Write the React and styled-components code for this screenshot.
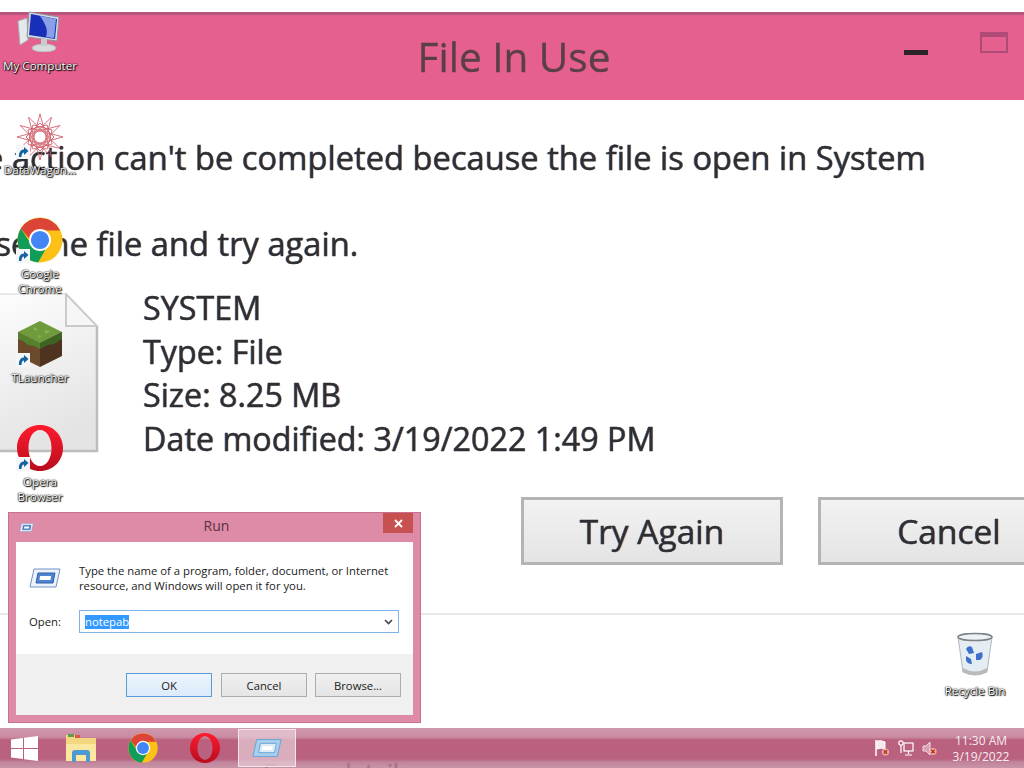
import React from 'react';
import styled, { createGlobalStyle } from 'styled-components';

const GlobalStyle = createGlobalStyle`
  html, body { margin: 0; padding: 0; background: #fff; }
  * { box-sizing: border-box; }
`;

const Desktop = styled.div`
  position: relative;
  width: 1024px;
  height: 768px;
  overflow: hidden;
  background: #fff;
  font-family: "Open Sans", "Noto Sans", sans-serif;
`;

/* wallpaper: a blown up file in use dialog */
const Wallpaper = styled.div`
  height: 768px;
  padding-top: 12px;
  overflow: hidden;
  filter: blur(0.6px);
  color: #2e2e33;
  -webkit-text-stroke: 0.35px;
  text-shadow: 0.8px 0 rgba(170, 90, 30, 0.35), -0.8px 0 rgba(30, 90, 170, 0.35);
`;

const BigHeader = styled.div`
  display: grid;
  grid-template-columns: 1fr auto 1fr;
  align-items: center;
  height: 88px;
  background: #e6608f;
  border-top: 3px solid #b8557b;
`;

const BigTitle = styled.div`
  grid-column: 2;
  font-size: 40.5px;
  color: #5a3f48;
  margin-left: 4px;
  margin-top: -3px;
  text-shadow: none;
`;

const BigControls = styled.div`
  align-self: start;
  display: flex;
  justify-content: flex-end;
  align-items: flex-start;
  gap: 52px;
  padding: 17px 16px 0 0;
`;

const BigMin = styled.div`
  width: 24px;
  height: 5px;
  margin-top: 18px;
  background: #2a2428;
`;

const BigMax = styled.div`
  width: 28px;
  height: 21px;
  border: 2px solid #b04a76;
  border-top-width: 5px;
`;

const Message = styled.div`
  margin-left: -53px;
  height: 86px;
  padding-top: 33px;
  font-size: 32.7px;
  line-height: 50px;
  white-space: nowrap;
`;

const FileRow = styled.div`
  display: flex;
  gap: 44px;
  height: 211px;
  margin-top: 14px;
`;

const FileSheet = styled.svg`
  flex: none;
  margin-top: 7px;
`;

const FileLines = styled.div`
  font-size: 32.3px;
  line-height: 43.5px;
`;

const BigButtons = styled.div`
  display: flex;
  gap: 35px;
  margin-left: 521px;
  height: 116px;
`;

const BigButton = styled.div`
  flex: none;
  width: 262px;
  height: 68px;
  display: flex;
  align-items: center;
  justify-content: center;
  font-size: 33.5px;
  background: linear-gradient(#f2f2f2, #e4e4e4);
  border: 3px solid #b4b4b4;
`;

const Separator = styled.div`
  height: 2px;
  background: #e8e8e8;
`;

const Details = styled.div`
  padding: 142px 0 0 263px;
  font-size: 24px;
  line-height: 30px;
`;

/* desktop icons */
const IconColumn = styled.div`
  position: absolute;
  left: 0;
  top: 9px;
  width: 78px;
  display: grid;
  grid-auto-rows: 104px;
`;

const Shortcut = styled.div`
  display: flex;
  flex-direction: column;
  align-items: center;
`;

const BinSpot = styled(Shortcut)`
  position: absolute;
  left: 936px;
  top: 632px;
  width: 78px;
`;

const IconImage = styled.div`
  position: relative;
  width: 48px;
  height: 49px;
  display: flex;
  align-items: flex-start;
  justify-content: center;
`;

const ArrowBadge = styled.div`
  position: absolute;
  left: 0;
  bottom: 3px;
  width: 14px;
  height: 14px;
  background: #f4f6f8;
  display: flex;
  align-items: center;
  justify-content: center;
`;

const IconLabel = styled.div`
  width: 80px;
  text-align: center;
  font-size: 11.6px;
  line-height: 15px;
  color: #fff;
  text-shadow: 0 0 2px #000, 1px 1px 1px #000, 0 0 1px #000;
`;

const BinLabel = styled(IconLabel)`
  margin-top: 2px;
`;

/* run dialog */
const RunWindow = styled.div`
  position: absolute;
  left: 8px;
  top: 512px;
  width: 413px;
  height: 211px;
  padding: 0 7px 7px;
  display: flex;
  flex-direction: column;
  background: #de8ba8;
  border: 1px solid #c96f90;
  font-size: 11.3px;
  color: #1a1a1a;
`;

const RunTitleBar = styled.div`
  flex: none;
  height: 29px;
  padding-left: 3px;
  display: grid;
  grid-template-columns: 1fr auto 1fr;
  align-items: center;
`;

const RunTitle = styled.div`
  font-size: 14px;
  color: #5a3040;
  margin: 0 0 4px 1px;
`;

const RunClose = styled.div`
  justify-self: end;
  align-self: start;
  width: 30px;
  height: 20px;
  background: #c75050;
  color: #fff;
  display: flex;
  align-items: center;
  justify-content: center;
`;

const RunBody = styled.div`
  flex: 1;
  display: flex;
  flex-direction: column;
  background: #fff;
`;

const RunMain = styled.div`
  flex: 1;
  padding: 21px 14px 0 13px;
`;

const RunIntro = styled.div`
  display: flex;
  align-items: center;
  gap: 18px;
  line-height: 15px;
`;

const RunOpen = styled.div`
  display: flex;
  align-items: center;
  margin-top: 17px;
  gap: 19px;
`;

const RunOpenLabel = styled.div`
  width: 31px;
`;

const Combo = styled.div`
  flex: 1;
  height: 23px;
  display: flex;
  align-items: center;
  justify-content: space-between;
  padding: 0 5px;
  border: 1px solid #7eb4ea;
`;

const Selected = styled.span`
  background: #3399ff;
  color: #fff;
  line-height: 14px;
`;

const RunFooter = styled.div`
  flex: none;
  height: 61px;
  display: flex;
  justify-content: flex-end;
  gap: 8px;
  padding: 19px 12px 0 0;
  background: #f0f0f0;
`;

const RunButton = styled.div`
  width: 86px;
  height: 24px;
  display: flex;
  align-items: center;
  justify-content: center;
  margin-right: ${p => (p.$primary ? 1 : 0)}px;
  background: ${p => (p.$primary ? 'linear-gradient(#ecf4fc, #dcecfa)' : 'linear-gradient(#f0f0f0, #e5e5e5)')};
  border: 1px solid ${p => (p.$primary ? '#5a9ad8' : '#acacac')};
`;

/* taskbar */
const Taskbar = styled.div`
  position: absolute;
  left: 0;
  right: 0;
  bottom: 0;
  height: 40px;
  display: flex;
  align-items: stretch;
  background: linear-gradient(
    #cf98ad 0,
    #c98ba3 9px,
    #b9617f 12px,
    #b9617f 31px,
    rgba(186, 118, 144, 0.9) 34px,
    rgba(190, 130, 152, 0.85) 40px
  );
`;

const StartSlot = styled.div`
  width: 50px;
  display: flex;
  align-items: center;
  justify-content: center;
  padding-right: 2px;
`;

const TaskSlot = styled.div`
  width: 62px;
  display: flex;
  align-items: center;
  justify-content: center;
  ${p => p.$active && `
    width: 58px;
    margin: 1px 0 1px 2px;
    background: rgba(232, 205, 215, 0.7);
    border: 1px solid #f2e6ea;
  `}
`;

const Tray = styled.div`
  margin-left: auto;
  display: flex;
  align-items: center;
  gap: 8px;
  padding-right: 8px;
`;

const Clock = styled.div`
  width: 70px;
  margin-left: 1px;
  text-align: center;
  font-size: 12px;
  line-height: 16px;
  color: #f6eef1;
  padding-top: 2px;
`;

const ShortcutArrow = () => (
  <ArrowBadge>
    <svg width="12" height="12" viewBox="0 0 12 12">
      <path d="M2 11 C1.5 6 4 3.5 7 3.5 L7 1 L11.5 5 L7 9 L7 6.5 C5.5 6.5 4.5 8 4.5 11 Z" fill="#14639f" />
    </svg>
  </ArrowBadge>
);

const ComputerIcon = () => (
  <svg width="48" height="43" viewBox="0 -3 48 43">
    <path d="M2 9 L11 6 L12 28 L4 33 Z" fill="#e6e9eb" stroke="#a9adb2" />
    <path d="M13 0 L43 5 L41 29 L11 25 Z" fill="#d5dce3" stroke="#8c939a" />
    <path d="M15 2 L41 7 L39 27 L13 23 Z" fill="#1a2fb8" />
    <path d="M24 4 L40 7 L38 26 L30 25 C33 17 28 10 24 4 Z" fill="#8aa0e6" />
    <ellipse cx="28" cy="36" rx="12" ry="4" fill="#d8dadc" stroke="#b5b7ba" />
    <path d="M25 27 H31 V34 H25 Z" fill="#c8cbce" />
  </svg>
);

const starPoint = (i, r) => {
  const a = (i * Math.PI) / 6 - Math.PI / 2;
  return `${(24 + r * Math.cos(a)).toFixed(2)} ${(24 + r * Math.sin(a)).toFixed(2)}`;
};

const WagonIcon = () => (
  <svg width="48" height="48" viewBox="0 0 48 48" fill="none" stroke="#d2616f" strokeWidth="0.9">
    {Array.from({ length: 12 }, (_, i) => (
      <g key={i}>
        <path d={`M${starPoint(i, 23)} L${starPoint(i + 5, 23)}`} />
        <path d={`M${starPoint(i, 14)} L${starPoint(i + 3, 14)}`} />
      </g>
    ))}
    <circle cx="24" cy="24" r="8" strokeWidth="1.6" stroke="#d98a90" />
    <circle cx="24" cy="24" r="4" fill="#fff" stroke="none" />
  </svg>
);

const ChromeIcon = ({ size = 46 }) => (
  <svg width={size} height={size} viewBox="0 0 48 48">
    <circle cx="24" cy="24" r="23.5" fill="#fbc116" />
    <path d="M4 12 A23.5 23.5 0 0 1 45 14 L24 14 A10 10 0 0 0 14 24 Z" fill="#db4437" />
    <path d="M4 12 A23.5 23.5 0 0 0 22 47.5 L32 30 A10 10 0 0 1 15 29 Z" fill="#0f9d58" />
    <circle cx="24" cy="24" r="11.5" fill="#fff" />
    <circle cx="24" cy="24" r="9.5" fill="#4285f4" />
  </svg>
);

const OperaIcon = ({ id = 'operaRed', width = 46, height = 46 }) => (
  <svg width={width} height={height} viewBox="0 0 46 46">
    <defs>
      <linearGradient id={id} x1="0" y1="0" x2="0" y2="1">
        <stop offset="0" stopColor="#ff1b2d" />
        <stop offset="1" stopColor="#b80d1e" />
      </linearGradient>
    </defs>
    <path
      fillRule="evenodd"
      d="M23 0 C36 0 46 10 46 23 C46 36 36 46 23 46 C10 46 0 36 0 23 C0 10 10 0 23 0 Z M23 5 C16 5 11.5 13 11.5 23 C11.5 33 16 41 23 41 C30 41 34.5 33 34.5 23 C34.5 13 30 5 23 5 Z"
      fill={`url(#${id})`}
    />
  </svg>
);

const BlockIcon = () => (
  <svg width="44" height="46" viewBox="0 0 44 46">
    <path d="M22 0 L44 11 L22 22 L0 11 Z" fill="#6f9b3d" />
    <path d="M0 11 L22 22 L22 46 L0 35 Z" fill="#6b4a2c" />
    <path d="M44 11 L22 22 L22 46 L44 35 Z" fill="#4d3320" />
    <path d="M0 11 L22 22 L22 28 L16 25 L10 24 L5 20 L0 18 Z" fill="#55802c" />
    <path d="M44 11 L22 22 L22 28 L30 24 L36 23 L44 18 Z" fill="#3f6322" />
    <path d="M15 6 l5 2 l-3 2 z M26 9 l6 1 l-4 3 z M20 14 l4 1 l-3 2 z" fill="#8ab352" />
  </svg>
);

const BinIcon = () => (
  <svg width="38" height="46" viewBox="0 0 38 46">
    <path d="M2 5 L36 5 L31 40 Q19 46 7 40 Z" fill="#e4edf4" stroke="#aeb8bf" />
    <ellipse cx="19" cy="5" rx="17" ry="3.5" fill="#eef2f5" stroke="#7b8186" strokeWidth="1.5" />
    <path d="M7 36 Q19 43 31 36 L31 40 Q19 46 7 40 Z" fill="#b8babc" />
    <path d="M10 17 Q12 13 16 15 L18 21 L13 22 Z M20 22 L26 20 Q28 25 24 28 L20 28 Z M10 24 L15 27 L16 32 Q11 32 10 28 Z" fill="#3f6fc9" />
  </svg>
);

const RunIcon = ({ width = 32, height = 20, light }) => (
  <svg width={width} height={height} viewBox="0 0 32 20">
    <path d="M5 1 H31 L27 19 H1 Z" fill={light ? '#a8d0ec' : '#eef3fa'} stroke={light ? '#5fa4d8' : '#6f93c4'} />
    <path d="M9 5 H26 L24 15 H7 Z" fill={light ? '#dcebf5' : '#4f84cf'} stroke={light ? '#5fa4d8' : '#2d5ea8'} />
    <path d="M11 8 H22 L21.5 12 H10.5 Z" fill="#fff" />
  </svg>
);

const WindowsLogo = () => (
  <svg width="27" height="25" viewBox="0 0 27 25" fill="#fff">
    <path d="M0 3.6 L12 2 V12 H0 Z" />
    <path d="M13 1.8 L27 0 V12 H13 Z" />
    <path d="M0 13 H12 V23 L0 21.4 Z" />
    <path d="M13 13 H27 V25 L13 23.2 Z" />
  </svg>
);

const ExplorerIcon = () => (
  <svg width="32" height="32" viewBox="0 0 32 32">
    <path d="M1 3 H12 L14 6 H31 V29 H1 Z" fill="#f3d77e" />
    <rect x="3" y="2" width="6" height="3" fill="#5aa04a" />
    <rect x="10" y="3" width="5" height="3" fill="#d8574a" />
    <path d="M1 12 H31 V29 H1 Z" fill="#fbe7a0" />
    <path d="M7 30 V21 Q7 18 10 18 H22 Q25 18 25 21 V30 H21 V23 H11 V30 Z" fill="#4c9bd0" />
  </svg>
);

const FlagIcon = () => (
  <svg width="16" height="18" viewBox="0 0 16 18">
    <path d="M2 1 V17" stroke="#fff" strokeWidth="1.5" />
    <path d="M3 2 Q7 1 11 3 V10 Q7 8 3 10 Z" fill="#f4e6ea" stroke="#fff" />
    <circle cx="11.5" cy="13" r="3.6" fill="#e9b0a8" />
    <path d="M9.8 11.3 L13.2 14.7 M13.2 11.3 L9.8 14.7" stroke="#c8281e" strokeWidth="1.4" />
  </svg>
);

const NetworkIcon = () => (
  <svg width="16" height="17" viewBox="0 0 16 17" fill="none" stroke="#fff" strokeWidth="1.2">
    <rect x="6" y="3" width="9" height="8" />
    <path d="M10.5 11 V14 M7 15 H14" />
    <circle cx="3" cy="3" r="2.2" />
    <path d="M3 5 V13" />
  </svg>
);

const SpeakerIcon = () => (
  <svg width="15" height="17" viewBox="0 0 15 17">
    <path d="M1 6 H4 L8 2 V15 L4 11 H1 Z" fill="#d9a0b2" stroke="#f0dde3" />
    <circle cx="11" cy="11.5" r="3.6" fill="#e9b0a8" />
    <path d="M9.3 9.8 L12.7 13.2 M12.7 9.8 L9.3 13.2" stroke="#c8281e" strokeWidth="1.4" />
  </svg>
);

const BigFile = () => (
  <FileSheet width="99" height="160" viewBox="0 0 99 160">
    <defs>
      <linearGradient id="sheet" x1="0" y1="0" x2="0.3" y2="1">
        <stop offset="0" stopColor="#fdfdfd" />
        <stop offset="1" stopColor="#e4e4e4" />
      </linearGradient>
    </defs>
    <path d="M-4 1 H66 L97 33 V158 H-4 Z" fill="url(#sheet)" />
    <path d="M-4 1 H66 L97 33 V158 H-4" fill="none" stroke="#d4d4d4" strokeWidth="1" />
    <path d="M97 33 V158 H-4" fill="none" stroke="#bcbcbc" strokeWidth="2.5" />
    <path d="M66 1 V33 H97 Z" fill="#f6f6f6" stroke="#cacaca" strokeWidth="2" />
  </FileSheet>
);

const icons = [
  { label: <>My Computer</>, image: <ComputerIcon /> },
  { label: <>DataWagon...</>, image: <WagonIcon />, link: true },
  { label: <>Google<br />Chrome</>, image: <ChromeIcon />, link: true },
  { label: <>TLauncher</>, image: <BlockIcon />, link: true },
  { label: <>Opera<br />Browser</>, image: <OperaIcon />, link: true },
];

const App = () => {
  return (
    <>
      <GlobalStyle />
      <Desktop>
        <Wallpaper>
          <BigHeader>
            <BigTitle>File In Use</BigTitle>
            <BigControls>
              <BigMin />
              <BigMax />
            </BigControls>
          </BigHeader>
          <Message>The action can't be completed because the file is open in System</Message>
          <Message>Close the file and try again.</Message>
          <FileRow>
            <BigFile />
            <FileLines>
              SYSTEM<br />
              Type: File<br />
              Size: 8.25 MB<br />
              Date modified: 3/19/2022 1:49 PM
            </FileLines>
          </FileRow>
          <BigButtons>
            <BigButton>Try Again</BigButton>
            <BigButton>Cancel</BigButton>
          </BigButtons>
          <Separator />
          <Details>Fewer details</Details>
        </Wallpaper>

        <IconColumn>
          {icons.map((icon, i) => (
            <Shortcut key={i}>
              <IconImage>
                {icon.image}
                {icon.link && <ShortcutArrow />}
              </IconImage>
              <IconLabel>{icon.label}</IconLabel>
            </Shortcut>
          ))}
        </IconColumn>

        <BinSpot>
          <IconImage><BinIcon /></IconImage>
          <BinLabel>Recycle Bin</BinLabel>
        </BinSpot>

        <RunWindow>
          <RunTitleBar>
            <RunIcon width={15} height={9} />
            <RunTitle>Run</RunTitle>
            <RunClose>
              <svg width="9" height="9" viewBox="0 0 9 9">
                <path d="M1 1 L8 8 M8 1 L1 8" stroke="#fff" strokeWidth="1.8" />
              </svg>
            </RunClose>
          </RunTitleBar>
          <RunBody>
            <RunMain>
              <RunIntro>
                <RunIcon />
                <div>Type the name of a program, folder, document, or Internet<br />resource, and Windows will open it for you.</div>
              </RunIntro>
              <RunOpen>
                <RunOpenLabel>Open:</RunOpenLabel>
                <Combo>
                  <Selected>notepab</Selected>
                  <svg width="9" height="6" viewBox="0 0 9 6">
                    <path d="M1 1 L4.5 4.5 L8 1" stroke="#444" strokeWidth="1.6" fill="none" />
                  </svg>
                </Combo>
              </RunOpen>
            </RunMain>
            <RunFooter>
              <RunButton $primary>OK</RunButton>
              <RunButton>Cancel</RunButton>
              <RunButton>Browse...</RunButton>
            </RunFooter>
          </RunBody>
        </RunWindow>

        <Taskbar>
          <StartSlot><WindowsLogo /></StartSlot>
          <TaskSlot><ExplorerIcon /></TaskSlot>
          <TaskSlot><ChromeIcon size={30} /></TaskSlot>
          <TaskSlot><OperaIcon id="operaTask" width={30} height={30} /></TaskSlot>
          <TaskSlot $active><RunIcon width={30} height={20} light /></TaskSlot>
          <Tray>
            <FlagIcon />
            <NetworkIcon />
            <SpeakerIcon />
            <Clock>11:30 AM<br />3/19/2022</Clock>
          </Tray>
        </Taskbar>
      </Desktop>
    </>
  );
};

export default App;
